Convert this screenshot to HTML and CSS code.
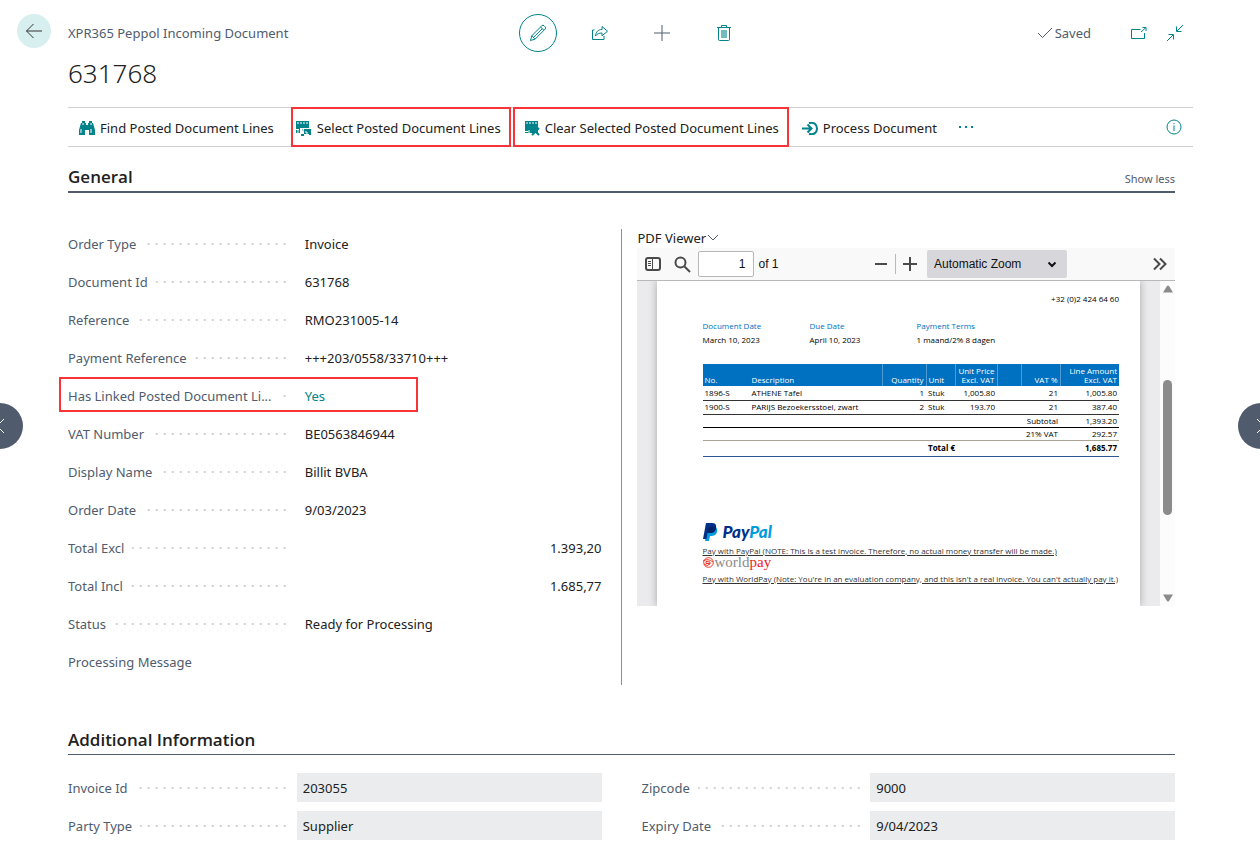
FILE: index.html
```html
<!DOCTYPE html>
<html lang="en">
<head>
  <meta charset="UTF-8">
  <meta name="viewport" content="width=device-width, initial-scale=1.0">
  <title>631768 - XPR365 Peppol Incoming Document</title>
  <link rel="stylesheet" href="styles.css">
</head>
<body>
  <header class="page-header">
    <button type="button" class="back" aria-label="Back">
      <svg width="18" height="16" viewBox="0 0 18 16"><path d="M17 8H1.500M8.500 1L1.500 8l7 7"/></svg>
    </button>
    <div class="caption">XPR365 Peppol Incoming Document</div>
    <div class="tools">
      <button type="button" class="tool edit" aria-label="Edit">
        <svg width="18" height="18" viewBox="0 0 18 18"><path d="M1.500 16.500l1.300-4.800L12.800 1.800a1.600 1.600 0 0 1 2.300 0l1 1a1.600 1.600 0 0 1 0 2.300L6.200 15.100zM2.800 11.700l3.400 3.400M11.600 3l3.400 3.400M4.500 13.400L13.200 4.800"/></svg>
      </button>
      <button type="button" class="tool" aria-label="Share">
        <svg width="18" height="16" viewBox="0 0 18 16"><path d="M1.500 5v9.500h11.500V11M1.500 5h2M4.500 11c.3-4 2.500-6.500 6.500-6.500V1.500l5.500 4.700-5.500 4.600V8C8 8 6 8.800 4.500 11z"/></svg>
      </button>
      <button type="button" class="tool new" aria-label="New">
        <svg width="18" height="18" viewBox="0 0 18 18"><path d="M9 1v16M1 9h16"/></svg>
      </button>
      <button type="button" class="tool" aria-label="Delete">
        <svg width="16" height="18" viewBox="0 0 16 18"><path d="M2.500 3.500v12q0 1 1 1h9q1 0 1-1v-12M1 3.500h14M5.500 3v-1.500h5V3"/><path class="fill" d="M5 6h6v8H5z"/></svg>
      </button>
    </div>
    <div class="status">
      <span class="saved"><svg width="16" height="12" viewBox="0 0 16 12"><path d="M1 6l4.500 4.500L15 1"/></svg>Saved</span>
      <button type="button" class="window-button" aria-label="Open in new window">
        <svg width="18" height="14" viewBox="0 0 18 14"><path d="M10.500 3.500H1.500v9h13V7M11 6l5-4.500M12.500 1.500H16V5"/></svg>
      </button>
      <button type="button" class="window-button" aria-label="Collapse">
        <svg width="18" height="18" viewBox="0 0 18 18"><path d="M17 1l-6 6M10.500 2.500v5h5M1 17l6-6M2.500 10.500h5v5"/></svg>
      </button>
    </div>
  </header>

  <main class="page">
    <h1>631768</h1>

    <nav class="actions">
      <button type="button" class="action find">
        <svg width="16" height="14" viewBox="0 0 16 14"><path d="M3 0h3v2h1v2h2V2h1V0h3v2h1l2 7v5h-6V9H6v5H0V9l2-7h1z"/><path class="cut" d="M2 8v4M12 8v4M4 2v2M12 2v2"/></svg>
        Find Posted Document Lines
      </button>
      <button type="button" class="action select highlight">
        <svg width="16" height="15" viewBox="0 0 16 15"><path d="M0 0h13v7H0zM0 7h4v5H0zM8 8h7v5H8zM5 13h3v2H5zM13 13h2v1h-2z"/><path class="cut" d="M2 1v2M5 1v2M8 1v2M11 1v2M0 8.500h3M2 9v3M6 7v3h2M10 10v2h2"/></svg>
        Select Posted Document Lines
      </button>
      <button type="button" class="action clear highlight">
        <svg width="15" height="15" viewBox="0 0 15 15"><path d="M0 0h13v12H0z"/><path class="cut" d="M2 1v2M5 1v2M8 1v2M11 1v2M0 10.500h3M4 9v3"/><path class="cross" d="M7 7l7 7M14 7l-7 7"/></svg>
        Clear Selected Posted Document Lines
      </button>
      <button type="button" class="action process">
        <svg width="16" height="13" viewBox="0 0 16 13"><path class="line" d="M0 6.500h9M5.500 2.500l4 4-4 4"/><path class="ring" d="M7 1.200c5-1.500 8 1.500 8 5.300s-3 6.800-8 5.300"/></svg>
        Process Document
      </button>
      <button type="button" class="more" aria-label="More options"><i></i><i></i><i></i></button>
      <button type="button" class="info" aria-label="Details">
        <svg width="16" height="16" viewBox="0 0 16 16"><circle cx="8" cy="8" r="7"/><path d="M8 6.500V12M8 4v1.200"/></svg>
      </button>
    </nav>

    <section class="fasttab">
      <div class="fasttab-header general-header">
        <h2>General</h2>
        <a href="#">Show less</a>
      </div>
      <div class="general">
        <div class="fields">
          <div class="field"><span class="label"><span>Order Type</span></span><span class="value">Invoice</span></div>
          <div class="field"><span class="label"><span>Document Id</span></span><span class="value">631768</span></div>
          <div class="field"><span class="label"><span>Reference</span></span><span class="value">RMO231005-14</span></div>
          <div class="field"><span class="label"><span>Payment Reference</span></span><span class="value">+++203/0558/33710+++</span></div>
          <div class="field linked"><span class="label"><span>Has Linked Posted Document Li...</span></span><a href="#" class="value">Yes</a></div>
          <div class="field"><span class="label"><span>VAT Number</span></span><span class="value">BE0563846944</span></div>
          <div class="field"><span class="label"><span>Display Name</span></span><span class="value">Billit BVBA</span></div>
          <div class="field"><span class="label"><span>Order Date</span></span><span class="value">9/03/2023</span></div>
          <div class="field"><span class="label"><span>Total Excl</span></span><span class="value amount">1.393,20</span></div>
          <div class="field"><span class="label"><span>Total Incl</span></span><span class="value amount">1.685,77</span></div>
          <div class="field"><span class="label"><span>Status</span></span><span class="value">Ready for Processing</span></div>
          <div class="field"><span class="label no-leader"><span>Processing Message</span></span></div>
        </div>

        <div class="viewer">
          <button type="button" class="viewer-title">PDF Viewer<svg width="12" height="8" viewBox="0 0 12 8"><path d="M1 1l5 5 5-5"/></svg></button>
          <div class="toolbar">
            <button type="button" class="sidebar-toggle" aria-label="Toggle sidebar">
              <svg width="16" height="14" viewBox="0 0 16 14"><rect x="1" y="1" width="14" height="12" rx="2"/><path class="thin" d="M7.500 1v12M3 4.500h3M3 6.500h3M3 8.500h3"/></svg>
            </button>
            <button type="button" class="search" aria-label="Find">
              <svg width="17" height="17" viewBox="0 0 17 17"><circle cx="6.500" cy="6.500" r="5"/><path d="M10.500 10.500l5.500 5.500"/></svg>
            </button>
            <input type="text" id="pageNumber" class="page-number" value="1" aria-label="Page">
            <label for="pageNumber">of 1</label>
            <div class="zoom">
              <button type="button" aria-label="Zoom out"><svg width="14" height="14" viewBox="0 0 14 14"><path d="M1 7h12"/></svg></button>
              <span class="separator"></span>
              <button type="button" aria-label="Zoom in"><svg width="14" height="14" viewBox="0 0 14 14"><path d="M0 7h14M7 0v14"/></svg></button>
              <div class="scale">
                <select aria-label="Zoom"><option>Automatic Zoom</option></select>
                <svg width="10" height="7" viewBox="0 0 10 7"><path d="M1.500 1.500L5 5l3.500-3.500"/></svg>
              </div>
            </div>
            <button type="button" class="tools-toggle" aria-label="Tools">
              <svg width="14" height="14" viewBox="0 0 14 14"><path d="M1 1.500L6.500 7 1 12.500M7 1.500L12.500 7 7 12.500"/></svg>
            </button>
          </div>
          <div class="document">
            <div class="sheet">
              <p class="phone">+32 (0)2 424 64 60</p>
              <dl class="terms">
                <div><dt>Document Date</dt><dd>March 10, 2023</dd></div>
                <div><dt>Due Date</dt><dd>April 10, 2023</dd></div>
                <div><dt>Payment Terms</dt><dd>1 maand/2% 8 dagen</dd></div>
              </dl>
              <table class="lines">
                <colgroup>
                  <col class="c-no"><col class="c-desc"><col class="c-qty"><col class="c-unit"><col class="c-price"><col class="c-blank"><col class="c-vat"><col class="c-amount">
                </colgroup>
                <thead>
                  <tr><th>No.</th><th>Description</th><th class="num">Quantity</th><th>Unit</th><th class="num">Unit Price<br>Excl. VAT</th><th></th><th class="num">VAT %</th><th class="num">Line Amount<br>Excl. VAT</th></tr>
                </thead>
                <tbody>
                  <tr><td>1896-S</td><td>ATHENE Tafel</td><td class="num">1</td><td>Stuk</td><td class="num">1,005.80</td><td></td><td class="num">21</td><td class="num">1,005.80</td></tr>
                  <tr><td>1900-S</td><td>PARIJS Bezoekersstoel, zwart</td><td class="num">2</td><td>Stuk</td><td class="num">193.70</td><td></td><td class="num">21</td><td class="num">387.40</td></tr>
                </tbody>
                <tfoot>
                  <tr class="subtotal"><td colspan="5"></td><td colspan="2" class="num">Subtotal</td><td class="num">1,393.20</td></tr>
                  <tr class="vat"><td colspan="5"></td><td colspan="2" class="num">21% VAT</td><td class="num">292.57</td></tr>
                  <tr class="total"><td colspan="3"></td><td colspan="4">Total €</td><td class="num">1,685.77</td></tr>
                </tfoot>
              </table>
              <div class="payment">
                <div class="paypal">
                  <svg width="15" height="18" viewBox="0 0 15 18"><path fill="#009cde" d="M5 4h8q2 2 1 5-1 4-6 4H7l-1 5H2z"/><path fill="#003087" d="M3 0h6q5 0 4 5-1 5-6 5H4.500L3.500 16H0z"/><path fill="#012169" d="M5 4h8q0 6-6 6H4.500z"/></svg>
                  <span>Pay<b>Pal</b></span>
                </div>
                <a href="#">Pay with PayPal (NOTE: This Is a test invoice. Therefore, no actual money transfer will be made.)</a>
                <div class="worldpay">
                  <svg width="11" height="11" viewBox="0 0 11 11"><circle cx="5.500" cy="5.500" r="4.800"/><path d="M0 4q5-3 10 1M1 7q3 3 6 0V5L3 4.500v2h4"/></svg>
                  <span>world<b>pay</b></span>
                </div>
                <a href="#">Pay with WorldPay (Note: You're in an evaluation company, and this isn't a real invoice. You can't actually pay it.)</a>
              </div>
            </div>
            <div class="scrollbar">
              <svg width="10" height="8" viewBox="0 0 10 8"><path d="M4 1q1-1 2 0l4 6.500H0z"/></svg>
              <div class="track"><div class="thumb"></div></div>
              <svg width="10" height="8" viewBox="0 0 10 8"><path d="M0 .5h10L6 7q-1 1-2 0z"/></svg>
            </div>
          </div>
        </div>
      </div>
    </section>

    <section class="fasttab">
      <div class="fasttab-header">
        <h2>Additional Information</h2>
      </div>
      <div class="additional">
        <div class="field"><label class="label" for="invoiceId"><span>Invoice Id</span></label><input type="text" id="invoiceId" value="203055" readonly></div>
        <div class="field"><label class="label" for="zipcode"><span>Zipcode</span></label><input type="text" id="zipcode" value="9000" readonly></div>
        <div class="field"><label class="label" for="partyType"><span>Party Type</span></label><input type="text" id="partyType" value="Supplier" readonly></div>
        <div class="field"><label class="label" for="expiryDate"><span>Expiry Date</span></label><input type="text" id="expiryDate" value="9/04/2023" readonly></div>
      </div>
    </section>
  </main>

  <button type="button" class="record-nav previous" aria-label="Previous record">
    <svg width="10" height="16" viewBox="0 0 10 16"><path d="M9 1L2 8l7 7"/></svg>
  </button>
  <button type="button" class="record-nav next" aria-label="Next record">
    <svg width="10" height="16" viewBox="0 0 10 16"><path d="M1 1l7 7-7 7"/></svg>
  </button>
</body>
</html>
```
FILE: styles.css
```css
*, *::after {
  box-sizing: border-box;
}
body {
  margin: 0;
  background: #fff;
  color: #212121;
  font-family: "Noto Sans", "Open Sans", sans-serif;
  font-size: 13px;
  line-height: 20px;
}
h1, h2, p, dl, dd {
  margin: 0;
}
button, input, select {
  font: inherit;
  color: inherit;
}
button {
  display: flex;
  align-items: center;
  justify-content: center;
  padding: 0;
  border: none;
  background: none;
  cursor: pointer;
}
svg {
  display: block;
  flex: none;
  fill: none;
  stroke: #00838a;
}

/* header */
.page-header {
  display: grid;
  grid-template-columns: auto 1fr auto 1fr;
  align-items: center;
  padding: 14px 67px 0 17px;
}
.back {
  align-self: start;
  width: 34px;
  height: 34px;
  margin-right: 17px;
  border-radius: 50%;
  background: #d8eff0;
}
.back svg {
  stroke: #333;
}
.caption {
  color: #505c6d;
}
.tools {
  display: flex;
  gap: 24px;
}
.tool {
  width: 38px;
  height: 38px;
}
.edit {
  border: 1px solid #00838a;
  border-radius: 50%;
}
.new svg {
  stroke: #505c6d;
}
.tool .fill {
  fill: #72bcc0;
  stroke: none;
}
.status {
  display: flex;
  justify-content: flex-end;
  align-items: center;
}
.saved {
  display: flex;
  align-items: center;
  gap: 2px;
  margin-right: 30px;
  color: #505c6d;
}
.saved svg {
  stroke: #505c6d;
}
.window-button {
  width: 36px;
  height: 36px;
}

.page {
  padding: 0 85px 4px 68px;
}
h1 {
  margin-top: 3px;
  font-size: 26px;
  font-weight: 300;
  line-height: 36px;
}

/* action bar */
.actions {
  display: flex;
  height: 40px;
  margin: 16px -18px 0 0;
  border-top: 1px solid #d0d0d4;
  border-bottom: 1px solid #d0d0d4;
}
.action {
  gap: 5px;
  margin: -1px 0;
  white-space: nowrap;
}
.action svg {
  fill: #00838a;
  stroke: none;
}
.action .cut {
  stroke: #fff;
}
.action .cross {
  stroke: #00838a;
  stroke-width: 2;
}
.action .line,
.action .ring {
  fill: none;
  stroke: #00838a;
  stroke-width: 2;
}
.find {
  padding: 2px 17px 0 11px;
}
.select {
  margin-right: 2px;
  padding: 2px 8px 0 3px;
}
.clear {
  padding: 2px 8px 0 10px;
}
.process {
  padding: 2px 12px 0 13px;
}
.highlight {
  border: 2px solid #f93438;
}
.more {
  gap: 4px;
  padding: 0 10px;
}
.more i {
  width: 2px;
  height: 2px;
  background: #00838a;
}
.info {
  margin: 0 11px 0 auto;
}

/* fasttabs */
.fasttab + .fasttab {
  margin-top: 43px;
}
.fasttab-header {
  display: flex;
  justify-content: space-between;
  padding-bottom: 2px;
  border-bottom: 1px solid #505c6d;
}
.general-header {
  margin-top: 18px;
  border-bottom-width: 2px;
}
.fasttab-header h2 {
  font-family: "Open Sans", sans-serif;
  font-size: 17px;
  font-weight: 600;
  line-height: 24px;
}
.fasttab-header a {
  align-self: flex-end;
  color: #505c6d;
  font-size: 11px;
  text-decoration: none;
}
.general {
  display: flex;
  padding-top: 32px;
}
.fields {
  width: calc(50% - 20px);
  padding-bottom: 4px;
}
.field {
  display: flex;
  align-items: center;
  gap: 10px;
}
.fields .field {
  height: 38px;
}
.label {
  flex: 0 0 41%;
  color: #505c6d;
  background: radial-gradient(circle, #d2d2d4 1px, transparent 1px) right -2px center / 8px 4px repeat-x;
}
.label span {
  padding-right: 8px;
  background: #fff;
}
.no-leader {
  background: none;
}
.value {
  flex: 1;
  padding-left: 8px;
}
.amount {
  text-align: right;
}
a.value {
  color: #00838a;
  text-decoration: none;
}
.linked {
  position: relative;
}
.linked::after {
  content: "";
  position: absolute;
  top: 0;
  left: -9px;
  width: 359px;
  height: 35px;
  border: 2px solid #f93438;
  pointer-events: none;
}
.linked .label {
  white-space: nowrap;
}
.additional {
  display: grid;
  grid-template-columns: 1fr 1fr;
  gap: 9px 40px;
  margin-top: 18px;
}
.additional input {
  flex: 1;
  min-width: 0;
  height: 29px;
  padding: 0 6px;
  border: none;
  background: #ebecee;
}

/* pdf viewer */
.viewer {
  flex: 1;
  min-width: 0;
  margin: 4px 0 0 19px;
  padding-left: 15px;
  border-left: 1px solid #8e9298;
}
.viewer-title {
  height: 19px;
  gap: 1px;
  padding: 0 0 2px 1px;
}
.viewer-title svg {
  stroke: #505c6d;
}
.toolbar {
  display: flex;
  align-items: center;
  height: 33px;
  padding: 0 8px;
  border-bottom: 1px solid #b8b8b8;
  background: #f9f9fa;
  color: #111;
  font-family: "Liberation Sans", Arial, sans-serif;
  font-size: 12px;
}
.toolbar svg {
  stroke: #4a4a4a;
  stroke-width: 2;
}
.toolbar .thin {
  stroke-width: 1;
}
.search {
  margin: 0 7px 0 13px;
}
.page-number {
  width: 56px;
  height: 26px;
  padding: 0 7px;
  border: 1px solid #b8b8b8;
  border-radius: 2px;
  background: #fff;
  text-align: right;
}
.toolbar label {
  margin-left: 5px;
}
.zoom {
  display: flex;
  align-items: center;
  gap: 7px;
  margin: 0 86px 0 auto;
}
.separator {
  width: 1px;
  height: 20px;
  background: #b8b8b8;
}
.scale {
  position: relative;
  margin-left: 3px;
}
.scale select {
  display: block;
  width: 140px;
  height: 28px;
  padding: 0 7px;
  border: none;
  border-radius: 2px;
  background: #d7d7db;
  appearance: none;
}
.scale svg {
  position: absolute;
  top: 11px;
  right: 10px;
  stroke: #111;
  pointer-events: none;
}
.document {
  display: flex;
  height: 325px;
  padding-left: 20px;
  overflow: hidden;
  background: #ebebed;
}
.sheet {
  flex: 1;
  min-width: 0;
  padding: 11px 21px 0 46px;
  background: #fff;
  box-shadow: 0 0 8px rgba(0,0,0,0.3);
  color: #000;
  font-family: "Open Sans", sans-serif;
  font-size: 8px;
  line-height: 14px;
}
.phone {
  text-align: right;
}
.terms {
  display: flex;
  margin-top: 13px;
}
.terms div {
  width: 107px;
  white-space: nowrap;
}
.terms dt {
  color: #0070c0;
}
.lines {
  width: 100%;
  margin-top: 17px;
  border-collapse: collapse;
  table-layout: fixed;
}
.c-no { width: 47px; }
.c-qty { width: 44px; }
.c-unit { width: 29px; }
.c-price { width: 42px; }
.c-blank { width: 24px; }
.c-vat { width: 39px; }
.c-amount { width: 59px; }
.lines th {
  height: 22px;
  padding: 0 2px 2px;
  background: #0070c0;
  color: #fff;
  font-weight: 400;
  line-height: 9px;
  text-align: left;
  vertical-align: bottom;
  white-space: nowrap;
}
.lines th + th + th {
  border-left: 1px solid #4f9bd3;
}
.lines td {
  height: 14px;
  padding: 0 2px 1px;
  border-bottom: 1px solid #333;
  line-height: 11px;
  white-space: nowrap;
}
.lines .num {
  text-align: right;
}
.lines .subtotal td {
  height: 13px;
  border-bottom-color: #000;
}
.lines .vat td {
  height: 13px;
  border-bottom-color: #a8a294;
}
.lines .total td {
  height: 16px;
  border-bottom-color: #2f5597;
  font-weight: 700;
}
.payment {
  margin-top: 65px;
  white-space: nowrap;
}
.payment a {
  display: block;
  color: #333;
  line-height: 11px;
}
.paypal,
.worldpay {
  display: flex;
}
.paypal {
  align-items: center;
  gap: 5px;
  height: 23px;
  padding-bottom: 2px;
}
.paypal svg {
  stroke: none;
}
.paypal span {
  color: #003087;
  font-family: Lato, sans-serif;
  font-size: 17px;
  font-style: italic;
  font-weight: 900;
}
.paypal b {
  color: #009cde;
}
.worldpay {
  gap: 1px;
  height: 17px;
}
.worldpay svg {
  margin-top: 1px;
  stroke: #ee3a2d;
}
.worldpay span {
  color: #8a8a8a;
  font-family: "Liberation Serif", serif;
  font-size: 15px;
  line-height: 12px;
}
.worldpay b {
  color: #ee1c1c;
  font-weight: 400;
}
.scrollbar {
  display: flex;
  flex-direction: column;
  align-items: center;
  width: 15px;
  margin-left: 20px;
  padding: 4px 0;
  background: #fcfcfc;
}
.scrollbar svg {
  fill: #8b8b8b;
  stroke: none;
}
.track {
  flex: 1;
  padding-top: 87px;
}
.thumb {
  width: 9px;
  height: 135px;
  border-radius: 5px;
  background: #8b8b8b;
}

/* previous / next record */
.record-nav {
  position: fixed;
  top: 403px;
  width: 46px;
  height: 46px;
  border-radius: 50%;
  background: #505c6d;
}
.record-nav svg {
  stroke: #fff;
}
.previous {
  left: -23px;
}
.next {
  right: -24px;
}
```
